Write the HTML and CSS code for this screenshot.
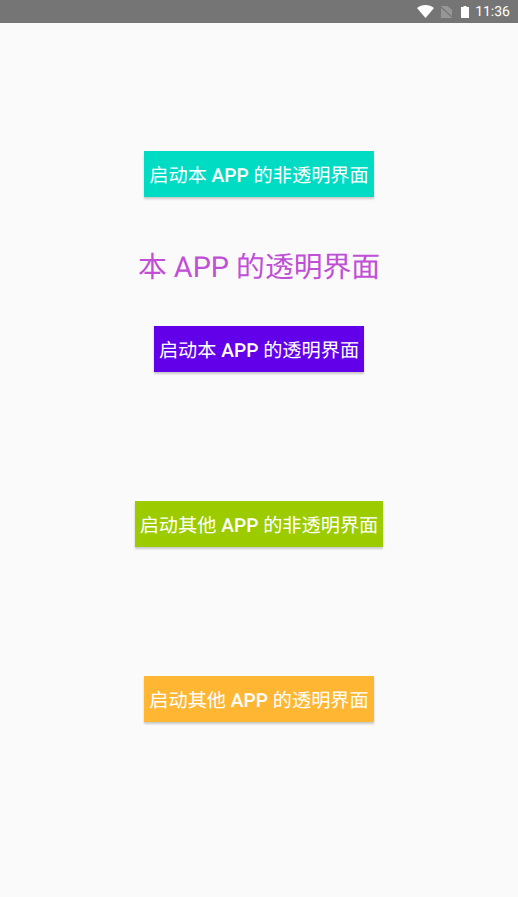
FILE: index.html
```html
<!DOCTYPE html>
<html>
<head>
    <title>透明界面</title>
    <meta charset="UTF-8">
    <link rel="stylesheet" href="styles.css">
</head>
<body>
    <div class="status-bar">
        <svg class="icon-wifi" width="17" height="13" viewBox="0 0 17 13"><path d="M0 3C2.300 1.100 5.300 0 8.500 0s6.200 1.100 8.500 3L8.500 13z" fill="#fff"/></svg>
        <svg class="icon-sim" width="11" height="12" viewBox="0 0 11 12"><path d="M0 0h6.500L11 4v8H0z" fill="#969696"/><path d="M0 1L11 11" stroke="#757575" stroke-width="1.200"/></svg>
        <svg class="icon-battery" width="8" height="12" viewBox="0 0 8 12"><path d="M2.500 0h3v1H8v11H0V1h2.500z" fill="#fff"/></svg>
        <span class="clock">11:36</span>
    </div>
    <div class="container">
        <button class="action-button teal">启动本 <b>APP</b> 的非透明界面</button>
        <h1 class="title">本 APP 的透明界面</h1>
        <button class="action-button purple">启动本 <b>APP</b> 的透明界面</button>
        <button class="action-button green">启动其他 <b>APP</b> 的非透明界面</button>
        <button class="action-button orange">启动其他 <b>APP</b> 的透明界面</button>
    </div>
</body>
</html>
```

FILE: styles.css
```css
body {
    margin: 0;
    height: 897px;
    overflow: hidden;
    background-color: #fafafa;
    font-family: Roboto, "Noto Sans CJK SC", sans-serif;
    text-rendering: geometricPrecision;
}

.status-bar {
    display: flex;
    align-items: center;
    justify-content: flex-end;
    height: 23px;
    padding-right: 8px;
    background-color: #757575;
}

.status-bar svg {
    flex-shrink: 0;
}

.icon-wifi {
    margin-right: 7px;
}

.icon-sim {
    margin-right: 9px;
}

.icon-battery {
    margin-right: 6px;
}

.clock {
    color: #ffffff;
    font-size: 14px;
    font-weight: 400;
}

.container {
    display: flex;
    flex-direction: column;
    align-items: center;
    padding-top: 128px;
}

.action-button {
    height: 46px;
    padding: 0 5px;
    border: none;
    border-radius: 0;
    color: #ffffff;
    font-family: inherit;
    font-size: 19.2px;
    font-weight: 400;
    text-rendering: geometricPrecision;
    white-space: nowrap;
    box-shadow: 0 2px 2px rgba(0, 0, 0, 0.2);
}

.action-button b {
    font-weight: 500;
}

.title {
    margin: 50px 0 37px;
    height: 42px;
    line-height: 42px;
    color: #c04fd6;
    font-size: 28.8px;
    font-weight: 400;
    white-space: nowrap;
}

.teal {
    background-color: #00dbc4;
}

.purple {
    background-color: #6200ea;
    margin-bottom: 129px;
}

.green {
    background-color: #9ccc00;
    margin-bottom: 129px;
}

.orange {
    background-color: #ffb733;
}
```
